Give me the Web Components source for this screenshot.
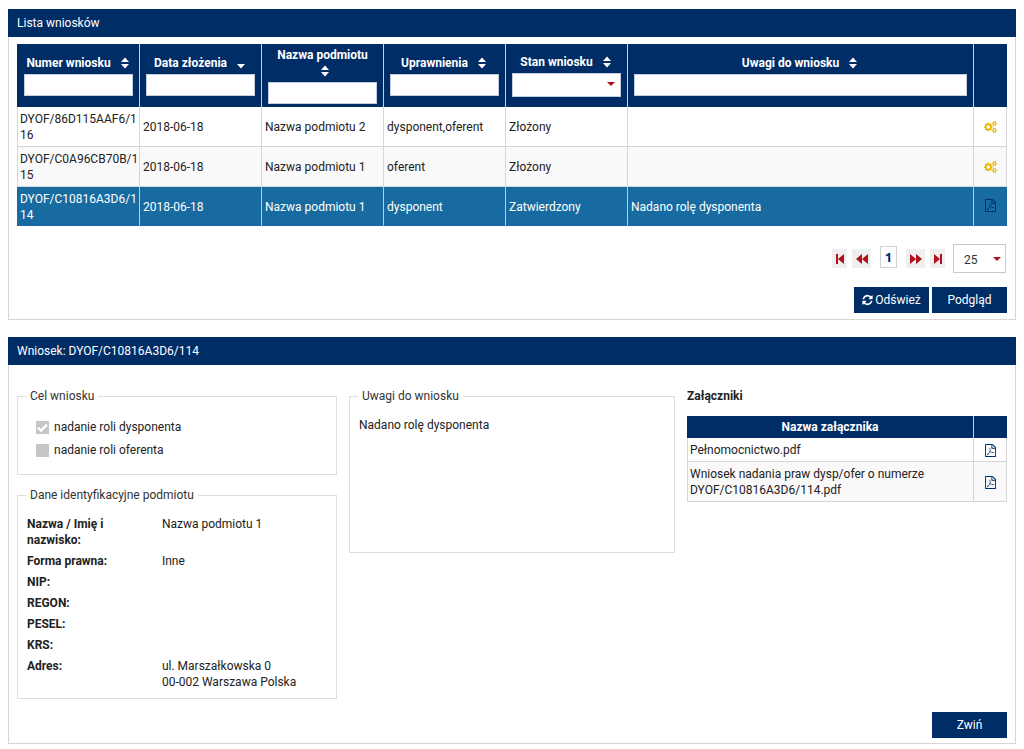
<!DOCTYPE html>
<html lang="pl">
<head>
<meta charset="utf-8">
<meta name="viewport" content="width=device-width, initial-scale=1">
<title>Lista wniosków</title>
<style>
  :root {
    --navy: #002d66;
    --selected: #186ba0;
    --line: #d6d6d6;
    --accent: #b0101c;
    --text: #222;
  }
  body {
    margin: 9px 8px 5px;
    background: #fff;
    color: var(--text);
    font: 12px/16px Roboto, "Liberation Sans", sans-serif;
  }
</style>
</head>
<body>
<requests-app></requests-app>

<script>
const ICONS = {
  sort: ['0 0 8 12', 'M0 5L4 0.5 8 5zM0 7L4 11.5 8 7z'],
  'sort-down': ['0 0 8 12', 'M0 7L4 11.5 8 7z'],
  first: ['0 0 10 12', 'M1 1h2v10h-2zM9 1v10L3 6z'],
  last: ['0 0 10 12', 'M7 1h2v10h-2zM1 1v10L7 6z'],
  prev: ['0 0 12 12', 'M6 1v10L0 6zM12 1v10L6 6z'],
  next: ['0 0 12 12', 'M0 1v10L6 6zM6 1v10L12 6z'],
  refresh: ['0 0 1536 1792', 'M1511 1056q0 5-1 7-64 268-268 434.5t-478 166.5q-146 0-282.5-55t-243.5-157l-129 129q-19 19-45 19t-45-19-19-45v-448q0-26 19-45t45-19h448q26 0 45 19t19 45-19 45l-137 137q71 66 161 102t187 36q134 0 250-65t186-179q11-17 53-117 8-23 30-23h192q13 0 22.5 9.5t9.5 22.5zm25-800v448q0 26-19 45t-45 19h-448q-26 0-45-19t-19-45 19-45l138-138q-148-137-349-137-134 0-250 65t-186 179q-11 17-53 117-8 23-30 23h-199q-13 0-22.5-9.5t-9.5-22.5v-7q65-268 270-434.5t480-166.5q146 0 284 55.5t245 156.5l130-129q19-19 45-19t45 19 19 45z'],
  pdf: ['0 0 1536 1792', 'M1468 380q28 28 48 76t20 88v1152q0 40-28 68t-68 28h-1344q-40 0-68-28t-28-68v-1600q0-40 28-68t68-28h896q40 0 88 20t76 48zm-444-244v376h376q-10-29-22-41l-313-313q-12-12-41-22zm384 1528v-1024h-416q-40 0-68-28t-28-68v-416h-768v1536h1280zm-514-593q33 26 84 56 59-7 117-7 147 0 177 49 16 22 2 52 0 1-1 2l-2 2v1q-6 38-71 38-48 0-115-20t-130-53q-221 24-392 83-153 262-242 262-15 0-28-7l-24-12q-1-1-6-5-10-10-6-36 9-40 56-91.5t132-96.5q14-9 23 6 2 2 2 4 52-85 107-197 68-136 104-262-24-82-30.5-159.5t6.5-127.5q11-40 42-40h22q23 0 35 15 18 21 9 68-2 6-4 8 1 3 1 8v30q-2 123-14 192 55 164 146 238zm-576 411q52-24 137-158-51 40-87.5 84t-49.5 74zm398-920q-15 42-2 132 1-7 7-44 0-3 7-43 1-4 4-8-1-1-1-2-1-2-1-3-1-22-13-36 0 1-1 2v2zm-124 661q135-54 284-81-2-1-13-9.5t-16-13.5q-76-67-127-176-27 86-83 197-30 56-45 83zm646-16q-24-24-140-24 76 28 124 28 14 0 18-1 0-1-2-3z'],
  cogs: ['0 0 1920 1792', 'M896 896q0-106-75-181t-181-75-181 75-75 181 75 181 181 75 181-75 75-181zm768 512q0-52-38-90t-90-38-90 38-38 90q0 53 37.5 90.5t90.5 37.5 90.5-37.5 37.5-90.5zm0-1024q0-52-38-90t-90-38-90 38-38 90q0 53 37.5 90.5t90.5 37.5 90.5-37.5 37.5-90.5zm-384 421v185q0 10-7 19.5t-16 10.5l-155 24q-11 35-32 76 34 48 90 115 7 11 7 20 0 12-7 19-23 30-82.5 89.5t-78.5 59.5q-11 0-21-7l-115-90q-37 19-77 31-11 108-23 155-7 24-30 24h-186q-11 0-20-7.5t-10-17.5l-23-153q-34-10-75-31l-118 89q-7 7-20 7-11 0-21-8-144-133-144-160 0-9 7-19 10-14 41-53t47-61q-23-44-35-82l-152-24q-10-1-17-9.5t-7-19.5v-185q0-10 7-19.5t16-10.5l155-24q11-35 32-76-34-48-90-115-7-11-7-20 0-12 7-20 22-30 82-89t79-59q11 0 21 7l115 90q34-18 77-32 11-108 23-154 7-24 30-24h186q11 0 20 7.5t10 17.5l23 153q34 10 75 31l118-89q8-7 20-7 11 0 21 8 144 133 144 160 0 8-7 19-12 16-42 54t-45 60q23 48 34 82l152 23q10 2 17 10.5t7 19.5zm640 533v140q0 16-149 31-12 27-30 52 51 113 51 138 0 4-4 7-122 71-124 71-8 0-46-47t-52-68q-20 2-30 2t-30-2q-14 21-52 68t-46 47q-2 0-124-71-4-3-4-7 0-25 51-138-18-25-30-52-149-15-149-31v-140q0-16 149-31 13-29 30-52-51-113-51-138 0-4 4-7 4-2 35-20t59-34 30-16q8 0 46 46.5t52 67.5q20-2 30-2t30 2q51-71 92-112l6-2q4 0 124 70 4 3 4 7 0 25-51 138 17 23 30 52 149 15 149 31zm0-1024v140q0 16-149 31-12 27-30 52 51 113 51 138 0 4-4 7-122 71-124 71-8 0-46-47t-52-68q-20 2-30 2t-30-2q-14 21-52 68t-46 47q-2 0-124-71-4-3-4-7 0-25 51-138-18-25-30-52-149-15-149-31v-140q0-16 149-31 13-29 30-52-51-113-51-138 0-4 4-7 4-2 35-20t59-34 30-16q8 0 46 46.5t52 67.5q20-2 30-2t30 2q51-71 92-112l6-2q4 0 124 70 4 3 4 7 0 25-51 138 17 23 30 52 149 15 149 31z']
};

const define = (name, render) => customElements.define(name, class extends HTMLElement {
  constructor() { super(); this.attachShadow({ mode: 'open' }); }
  connectedCallback() { this.shadowRoot.innerHTML = render(this); }
});

/* Styles shared by both data tables. */
const TABLE_CSS = `
  :host { display: block; }
  table { width: 100%; border-collapse: separate; border-spacing: 0; table-layout: fixed; }
  th { background: var(--navy); color: #fff; font-weight: 700; padding: 3px 6px;
       border-right: 1px solid #c3cfdd; text-align: center; }
  th:last-child { border-right-color: var(--navy); }
  td { padding: 4px 0 3px 3px; border-right: 1px solid var(--line);
       border-bottom: 1px solid var(--line); overflow-wrap: anywhere; }
  td:first-child { border-left: 1px solid var(--line); padding-left: 2px; }
  tbody tr:nth-child(even) td { background: #f9f9f9; }
  td:last-child { padding: 0; text-align: center; }
  a { display: inline-block; vertical-align: middle; color: var(--navy); }
`;

define('ui-icon', el => {
  const [box, d] = ICONS[el.getAttribute('name')];
  return `<style>
    :host { display: inline-block; width: 12px; height: 12px; }
    svg { display: block; width: 100%; height: 100%; fill: currentColor; }
  </style><svg viewBox="${box}" aria-hidden="true"><path d="${d}"/></svg>`;
});

define('ui-button', () => `<style>
    :host { display: block; }
    button { display: flex; align-items: center; justify-content: center; gap: 2px;
      box-sizing: border-box; min-width: 75px; height: 26px; padding: 0 8px; border: 0;
      background: var(--navy); color: #fff; font: inherit; cursor: pointer; }
  </style><button type="button"><slot></slot></button>`);

define('ui-panel', () => `<style>
    :host { display: block; }
    section { border: 1px solid var(--line); border-top: 0; }
    h2 { margin: 0 -1px; padding: 6px 9px; background: var(--navy); color: #fff;
      font-size: 12px; font-weight: 400; }
  </style><section><h2><slot name="title"></slot></h2><slot></slot></section>`);

define('ui-fieldset', el => `<style>
    :host { display: block; }
    fieldset { box-sizing: border-box; min-width: 0; height: 100%; margin: 0; padding: 13px 8px 8px;
      border: 1px solid #dedede; }
    legend { padding: 0 4px; color: #333; }
  </style><fieldset><legend>${el.getAttribute('legend')}</legend><slot></slot></fieldset>`);

define('ui-check', el => `<style>
    :host { display: block; }
    label { display: flex; align-items: center; gap: 5px; padding: 0 10px; }
    input { appearance: none; width: 13px; height: 13px; margin: 0; background: #c6c6c6; }
    input:checked { background: #c6c6c6 url("data:image/svg+xml,%3Csvg xmlns='http://www.w3.org/2000/svg' viewBox='0 0 13 13'%3E%3Cpath d='M2 6.5l3 3.2 6-6' fill='none' stroke='white' stroke-width='2.4'/%3E%3C/svg%3E"); }
  </style><label><input type="checkbox" disabled ${el.hasAttribute('checked') ? 'checked' : ''}><slot></slot></label>`);

define('request-table', () => {
  const cols = [
    ['numer', 'Numer wniosku', 'sort'], ['data', 'Data złożenia', 'sort-down'],
    ['nazwa', 'Nazwa podmiotu', 'sort'], ['upr', 'Uprawnienia', 'sort'],
    ['stan', 'Stan wniosku', 'sort', true], ['uwagi', 'Uwagi do wniosku', 'sort']
  ];
  const rows = [
    ['DYOF/86D115AAF6/116', '2018-06-18', 'Nazwa podmiotu 2', 'dysponent,oferent', 'Złożony', '', 'cogs'],
    ['DYOF/C0A96CB70B/115', '2018-06-18', 'Nazwa podmiotu 1', 'oferent', 'Złożony', '', 'cogs'],
    ['DYOF/C10816A3D6/114', '2018-06-18', 'Nazwa podmiotu 1', 'dysponent', 'Zatwierdzony', 'Nadano rolę dysponenta', 'pdf']
  ];
  return `<style>${TABLE_CSS}
    col { width: 122px; } col.number { width: 123px; } col.wide { width: auto; } col.action { width: 33px; }
    th:first-child { padding-left: 7px; }
    td:first-child { word-break: break-all; }
    th ui-icon { width: 8px; margin: 0 2px 0 7px; vertical-align: -2px; }
    input, select { display: block; box-sizing: border-box; width: 100%; height: 22px; margin: 3px 0 0;
      border: 1px solid #c3cfdd; border-radius: 0; background: #fff; padding: 0 3px; font: inherit; }
    select { appearance: none; height: 24px;
      background: #fff url("data:image/svg+xml,%3Csvg xmlns='http://www.w3.org/2000/svg' viewBox='0 0 8 5'%3E%3Cpath d='M0 0h8L4 4z' fill='%23b0101c'/%3E%3C/svg%3E") no-repeat right 5px top 8px / 8px 5px; }
    tbody tr.selected td { background: var(--selected); color: #fff; border-bottom-color: var(--selected);
      border-right-color: #b5cfe0; padding-bottom: 2px; }
    tbody tr.selected td:first-child { border-left-color: var(--selected); }
    tbody tr.selected td:last-child { border-right-color: var(--selected); }
    .cogs { color: #e5b800; }
    .cogs ui-icon { width: 13px; }
    .pdf ui-icon { width: 11px; height: 13px; }
    ui-icon { display: block; } th ui-icon { display: inline-block; }
  </style>
  <table>
    <colgroup><col class="number"><col><col><col><col><col class="wide"><col class="action"></colgroup>
    <thead><tr>${cols.map(([id, t, icon, sel]) => `<th scope="col"><label for="${id}">${t}</label> <ui-icon name="${icon}"></ui-icon>${
      sel ? `<select id="${id}"><option></option></select>` : `<input id="${id}" type="text">`}</th>`).join('')}<th></th></tr></thead>
    <tbody>${rows.map((r, i) => `<tr class="${i === 2 ? 'selected' : ''}">${r.slice(0, 6).map(c => `<td>${c}</td>`).join('')
      }<td><a class="${r[6]}" href="#" aria-label="${r[6] === 'pdf' ? 'Pobierz PDF' : 'Przetwarzanie'}"><ui-icon name="${r[6]}"></ui-icon></a></td></tr>`).join('')}</tbody>
  </table>`;
});

define('ui-pager', () => `<style>
    :host { display: block; }
    nav { display: flex; align-items: center; justify-content: flex-end; gap: 5px; padding-right: 1px; }
    button { display: grid; place-items: center; height: 19px; padding: 0; border: 0;
      background: #efefef; color: var(--accent); }
    .edge { width: 15px; } .edge ui-icon { width: 10px; }
    .step { width: 19px; }
    .page { box-sizing: border-box; width: 17px; height: 22px; margin: 0 4px 4px; border: 1px solid #d0d0d0;
      background: #fff; color: var(--navy); font: 700 13px/16px "Open Sans", sans-serif; }
    select { appearance: none; box-sizing: border-box; width: 53px; height: 29px; margin-left: 3px; padding: 3px 0 0 10px;
      border: 1px solid #c9c9c9; border-radius: 0; color: #333; font: inherit;
      background: #fff url("data:image/svg+xml,%3Csvg xmlns='http://www.w3.org/2000/svg' viewBox='0 0 8 5'%3E%3Cpath d='M0 0h8L4 4z' fill='%23b0101c'/%3E%3C/svg%3E") no-repeat right 4px top 12px / 8px 5px; }
  </style>
  <nav aria-label="Stronicowanie">
    <button class="edge" type="button" aria-label="Pierwsza"><ui-icon name="first"></ui-icon></button>
    <button class="step" type="button" aria-label="Poprzednia"><ui-icon name="prev"></ui-icon></button>
    <button class="page" type="button">1</button>
    <button class="step" type="button" aria-label="Następna"><ui-icon name="next"></ui-icon></button>
    <button class="edge" type="button" aria-label="Ostatnia"><ui-icon name="last"></ui-icon></button>
    <select aria-label="Liczba wierszy"><option>25</option></select>
  </nav>`);

define('entity-data', () => {
  const data = [['Nazwa / Imię i nazwisko:', 'Nazwa podmiotu 1'], ['Forma prawna:', 'Inne'], ['NIP:', ''],
    ['REGON:', ''], ['PESEL:', ''], ['KRS:', ''], ['Adres:', 'ul. Marszałkowska 0<br>00-002 Warszawa Polska']];
  return `<style>
    :host { display: block; }
    dl { display: grid; grid-template-columns: 9fr 11fr; gap: 5px 0; margin: 0; }
    dt { font-weight: 700; padding: 0 32px 0 1px; } dd { margin: 0; }
  </style><dl>${data.map(([k, v]) => `<dt>${k}</dt><dd>${v}</dd>`).join('')}</dl>`;
});

define('attachment-list', () => `<style>${TABLE_CSS}
    h3 { margin: 0 0 12px; font-size: 12px; font-weight: 700; }
    col.action { width: 33px; }
    ui-icon { display: block; width: 11px; height: 13px; }
  </style>
  <h3>Załączniki</h3>
  <table>
    <colgroup><col><col class="action"></colgroup>
    <thead><tr><th scope="col">Nazwa załącznika</th><th></th></tr></thead>
    <tbody>
      <tr><td>Pełnomocnictwo.pdf</td><td><a href="#" aria-label="Pobierz Pełnomocnictwo.pdf"><ui-icon name="pdf"></ui-icon></a></td></tr>
      <tr><td>Wniosek nadania praw dysp/ofer o numerze DYOF/C10816A3D6/114.pdf</td><td><a href="#" aria-label="Pobierz wniosek"><ui-icon name="pdf"></ui-icon></a></td></tr>
    </tbody>
  </table>`);

define('requests-app', () => `<style>
    :host { display: flex; flex-direction: column; gap: 17px; }
    .list { padding: 7px 8px 6px; }
    ui-pager { margin: 18px 0 14px; }
    .actions { display: flex; justify-content: flex-end; gap: 3px; }
    ui-button ui-icon { width: 11px; }
    .details { padding: 23px 8px 5px; }
    .columns { display: grid; grid-template-columns: 320fr 326fr 320fr; gap: 12px; align-items: start; }
    .left { display: grid; gap: 12px; }
    .checks { display: grid; gap: 7px; padding: 2px 0 8px; }
    .note { min-height: 127px; padding-left: 1px; }
    .details .actions { margin-top: 13px; }
  </style>
  <ui-panel><span slot="title">Lista wniosków</span>
    <div class="list">
      <request-table></request-table>
      <ui-pager></ui-pager>
      <div class="actions">
        <ui-button><ui-icon name="refresh"></ui-icon>Odśwież</ui-button>
        <ui-button>Podgląd</ui-button>
      </div>
    </div>
  </ui-panel>
  <ui-panel><span slot="title">Wniosek: DYOF/C10816A3D6/114</span>
    <div class="details">
      <div class="columns">
        <div class="left">
          <ui-fieldset legend="Cel wniosku"><div class="checks">
            <ui-check checked>nadanie roli dysponenta</ui-check>
            <ui-check>nadanie roli oferenta</ui-check>
          </div></ui-fieldset>
          <ui-fieldset legend="Dane identyfikacyjne podmiotu"><entity-data></entity-data></ui-fieldset>
        </div>
        <ui-fieldset legend="Uwagi do wniosku"><div class="note">Nadano rolę dysponenta</div></ui-fieldset>
        <attachment-list></attachment-list>
      </div>
      <div class="actions"><ui-button>Zwiń</ui-button></div>
    </div>
  </ui-panel>`);
</script>
</body>
</html>
